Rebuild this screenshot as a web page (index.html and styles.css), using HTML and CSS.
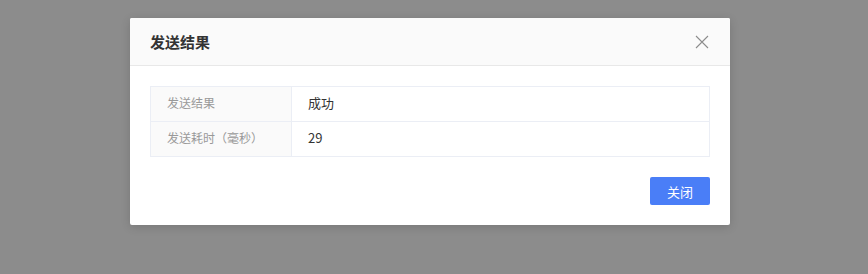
FILE: index.html
```html
<!DOCTYPE html>
<html lang="zh">
<head>
<meta charset="utf-8">
<link rel="stylesheet" href="styles.css">
</head>
<body>
<div class="mask">
  <div class="dialog">
    <div class="dialog-header">
      <span class="dialog-title">发送结果</span>
      <button class="close" aria-label="close">
        <svg width="14" height="14" viewBox="0 0 14 14"><path d="M1 1 L13 13 M13 1 L1 13" stroke="#8c8c8c" stroke-width="1.1" fill="none"/></svg>
      </button>
    </div>
    <div class="dialog-body">
      <table class="desc">
        <tr><td class="label">发送结果</td><td class="value">成功</td></tr>
        <tr><td class="label">发送耗时（毫秒）</td><td class="value">29</td></tr>
      </table>
    </div>
    <div class="dialog-footer">
      <button class="btn-primary">关闭</button>
    </div>
  </div>
</div>
</body>
</html>
```
FILE: styles.css
```css
html, body { margin: 0; padding: 0; }
body {
  font-family: "Noto Sans CJK SC", "Noto Sans", sans-serif;
  background: #8c8c8c;
  width: 868px;
  height: 274px;
  overflow: hidden;
}
.mask {
  display: flex;
  justify-content: center;
  padding: 18px 8px 0 0;
}
.dialog {
  width: 600px;
  background: #fff;
  border-radius: 2px;
  box-shadow: 0 2px 10px rgba(0,0,0,0.15);
}
.dialog-header {
  height: 48px;
  box-sizing: border-box;
  background: #fafafa;
  border-bottom: 1px solid #e8e8e8;
  display: flex;
  align-items: center;
  justify-content: space-between;
  padding: 0 20px;
  border-radius: 2px 2px 0 0;
}
.dialog-title {
  font-size: 15px;
  font-weight: 700;
  color: #333;
}
.close {
  border: 0;
  background: none;
  padding: 0;
  width: 14px;
  height: 14px;
  margin-right: 1px;
  display: flex;
}
.dialog-body {
  padding: 20px 20px 0;
}
.desc {
  width: 100%;
  border-collapse: collapse;
  font-size: 13px;
  line-height: 18px;
}
.desc td {
  border: 1px solid #ebeef5;
  height: 35px;
  padding: 0 16px 2px;
  box-sizing: border-box;
}
.desc .label {
  width: 141px;
  background: #fafafa;
  color: #999;
  font-size: 12px;
}
.desc .value {
  color: #333;
}
.dialog-footer {
  display: flex;
  justify-content: flex-end;
  padding: 20px 20px 20px;
}
.btn-primary {
  width: 60px;
  height: 28px;
  border: 0;
  border-radius: 2px;
  background: #4a7ef7;
  color: #fff;
  font-family: inherit;
  font-size: 13px;
  padding: 0;
}
```
